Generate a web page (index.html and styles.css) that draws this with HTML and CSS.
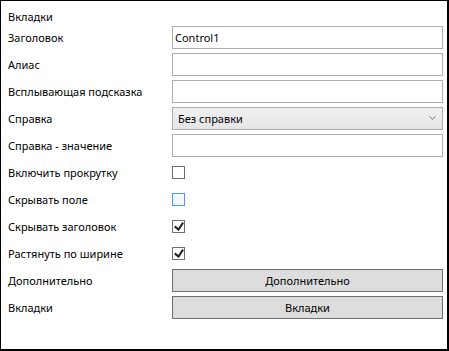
FILE: index.html
```html
<!DOCTYPE html>
<html lang="ru">
<head>
<meta charset="UTF-8" />
<title>Вкладки</title>
<link rel="stylesheet" href="styles.css">
</head>
<body>

<div class="panel">
  <div class="title">Вкладки</div>

  <div class="props">
    <div class="label">Заголовок</div>
    <div class="textbox">Control1</div>

    <div class="label">Алиас</div>
    <div class="textbox"></div>

    <div class="label">Всплывающая подсказка</div>
    <div class="textbox"></div>

    <div class="label">Справка</div>
    <div class="combo">
      <span>Без справки</span>
      <svg class="chevron" width="7" height="4" viewBox="0 0 7 4">
        <path d="M0.5 0.5 L3.5 3.3 L6.5 0.5" fill="none" stroke="#707070" stroke-width="1" />
      </svg>
    </div>

    <div class="label">Справка - значение</div>
    <div class="textbox"></div>

    <div class="label">Включить прокрутку</div>
    <div class="cell"><span class="check"></span></div>

    <div class="label">Скрывать поле</div>
    <div class="cell"><span class="check hover"></span></div>

    <div class="label">Скрывать заголовок</div>
    <div class="cell">
      <span class="check">
        <svg width="10" height="9" viewBox="0 0 10 9.1">
          <path d="M9.975 1.223L4.698 9.098L4.522 9.098L0 5.193L1.277 3.522L4.255 6.088L8.333 0L9.975 1.223Z" fill="#212121" />
        </svg>
      </span>
    </div>

    <div class="label">Растянуть по ширине</div>
    <div class="cell">
      <span class="check">
        <svg width="10" height="9" viewBox="0 0 10 9.1">
          <path d="M9.975 1.223L4.698 9.098L4.522 9.098L0 5.193L1.277 3.522L4.255 6.088L8.333 0L9.975 1.223Z" fill="#212121" />
        </svg>
      </span>
    </div>

    <div class="label">Дополнительно</div>
    <div class="button">Дополнительно</div>

    <div class="label">Вкладки</div>
    <div class="button">Вкладки</div>
  </div>
</div>

</body>
</html>
```

FILE: styles.css
```css
body {
  margin: 0;
  background: #fff;
  color: #000;
  font-family: "Noto Sans", "Open Sans", sans-serif;
  font-size: 11px;
}
.panel {
  width: 449px;
  height: 351px;
  box-sizing: border-box;
  border: solid #000;
  border-width: 1px 2px 2px 1px;
  padding: 7px 4px 0 7px;
}
.title {
  line-height: 18px;
}
.props {
  display: grid;
  grid-template-columns: 164px 1fr;
  grid-auto-rows: 23px;
  row-gap: 4px;
  align-items: center;
}
.label {
  line-height: 18px;
  white-space: nowrap;
}
.textbox,
.combo,
.button {
  height: 23px;
  box-sizing: border-box;
  line-height: 21px;
}
.textbox {
  border: 1px solid #abadb3;
  padding: 0 2px;
}
.combo {
  display: flex;
  align-items: center;
  justify-content: space-between;
  border: 1px solid #acacac;
  background: linear-gradient(#f0f0f0, #e5e5e5);
  padding: 0 6px 0 5px;
}
.chevron {
  display: block;
  margin-top: -1px;
}
.button {
  border: 1px solid #707070;
  background: #dddddd;
  text-align: center;
}
.cell {
  display: flex;
  align-items: center;
}
.check {
  width: 13px;
  height: 13px;
  box-sizing: border-box;
  border: 1px solid #707070;
  background: #fff;
  display: flex;
  align-items: center;
  justify-content: center;
}
.check.hover {
  border-color: #5593ff;
  background: #f3f9ff;
}
```
